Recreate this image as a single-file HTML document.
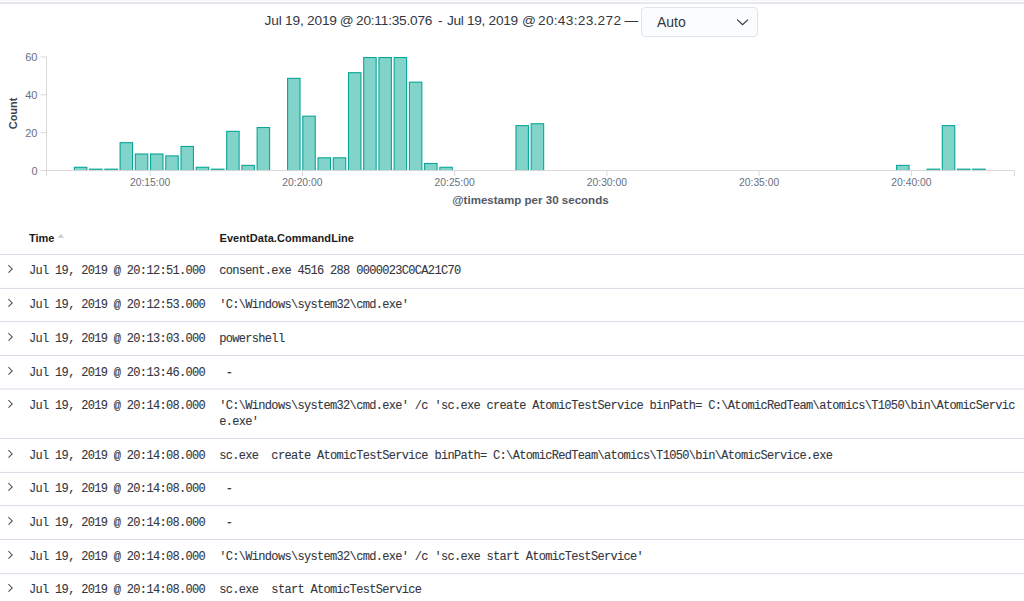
<!DOCTYPE html>
<html><head><meta charset="utf-8"><title>Discover</title>
<style>
html,body{margin:0;padding:0;background:#fff;}
body{width:1024px;height:601px;overflow:hidden;position:relative;font-family:"Liberation Sans",sans-serif;color:#343741;}
.abs{position:absolute;}
.top0{position:absolute;left:0;top:0;width:1024px;height:1px;background:#f7f8fa;}
.top1{position:absolute;left:0;top:2px;width:1024px;height:1px;background:#e8ebf2;}
.top2{position:absolute;left:0;top:3px;width:1024px;height:1px;background:#e2e6ec;}
.top3{position:absolute;left:0;top:5px;width:1024px;height:1px;background:#fcfcfc;}
.title{position:absolute;left:265px;top:10.6px;font-size:13.7px;line-height:20px;white-space:nowrap;color:#343741;}
.sel{position:absolute;left:641px;top:7px;width:115px;height:27.8px;border:1px solid #dfe4ec;border-radius:4px;background:#fbfcfd;box-sizing:content-box;}
.sel .t{position:absolute;left:15px;top:4px;font-size:14px;line-height:20px;color:#343741;}
.sel svg{position:absolute;left:94px;top:10.2px;}
svg.chart{position:absolute;left:0;top:0;}
.ax line{stroke:#d9d9d9;stroke-width:1;}
.bars rect{fill:#82d4ca;stroke:#07a696;stroke-width:1.1;}
.yl text,.xl text{font-family:"Liberation Sans",sans-serif;font-size:11px;fill:#69707d;}
.xl text{font-size:10.3px;}
.hdr{position:absolute;top:231.1px;font-size:11px;font-weight:bold;line-height:14px;color:#1a1c21;white-space:nowrap;}
.tm,.cl{position:absolute;font-family:"Liberation Mono",monospace;font-size:12px;letter-spacing:-0.68px;line-height:15.6px;color:#343741;-webkit-text-stroke:0.1px #343741;white-space:pre;}
.tm{left:29px;}
.cl{left:219.2px;width:799px;white-space:pre-wrap;word-break:break-all;}
.chev{position:absolute;left:6.5px;width:8px;height:10px;}
.chev svg{display:block;}
.hl{position:absolute;left:0;width:1024px;height:1px;background:#d3dae6;}
</style></head><body>
<div class="top0"></div>
<div class="top1"></div><div class="top2"></div><div class="top3"></div>
<div class="title" style="left:264.6px;letter-spacing:-0.2px">Jul 19, 2019</div><div class="title" style="left:339.8px">@</div><div class="title" style="left:356px;letter-spacing:-0.22px">20:11:35.076</div><div class="title" style="left:437.9px">-</div><div class="title" style="left:446.9px;letter-spacing:-0.3px">Jul 19, 2019</div><div class="title" style="left:522.1px">@</div><div class="title" style="left:538px;letter-spacing:0.28px">20:43:23.272</div><div class="title" style="left:624.6px">—</div>
<div class="sel"><span class="t">Auto</span><svg width="14" height="8" viewBox="0 0 14 8"><path d="M1.2 1.6 L6.6 6.6 L12 1.6" fill="none" stroke="#343741" stroke-width="1.25"/></svg></div>
<svg class="chart" width="1024" height="215" viewBox="0 0 1024 215">
<g class="bars">
<rect x="74.42" y="167.27" width="12.45" height="3.23"/>
<rect x="89.65" y="169.16" width="12.45" height="1.34"/>
<rect x="104.87" y="169.16" width="12.45" height="1.34"/>
<rect x="120.10" y="142.67" width="12.45" height="27.83"/>
<rect x="135.32" y="154.02" width="12.45" height="16.48"/>
<rect x="150.55" y="154.02" width="12.45" height="16.48"/>
<rect x="165.78" y="155.91" width="12.45" height="14.59"/>
<rect x="181.00" y="146.45" width="12.45" height="24.05"/>
<rect x="196.23" y="167.27" width="12.45" height="3.23"/>
<rect x="211.45" y="169.16" width="12.45" height="1.34"/>
<rect x="226.68" y="131.32" width="12.45" height="39.18"/>
<rect x="241.91" y="165.37" width="12.45" height="5.13"/>
<rect x="257.13" y="127.53" width="12.45" height="42.97"/>
<rect x="287.58" y="78.34" width="12.45" height="92.16"/>
<rect x="302.81" y="116.18" width="12.45" height="54.32"/>
<rect x="318.04" y="157.81" width="12.45" height="12.69"/>
<rect x="333.26" y="157.81" width="12.45" height="12.69"/>
<rect x="348.49" y="72.67" width="12.45" height="97.83"/>
<rect x="363.71" y="57.53" width="12.45" height="112.97"/>
<rect x="378.94" y="57.53" width="12.45" height="112.97"/>
<rect x="394.17" y="57.53" width="12.45" height="112.97"/>
<rect x="409.39" y="82.13" width="12.45" height="88.37"/>
<rect x="424.62" y="163.48" width="12.45" height="7.02"/>
<rect x="439.84" y="167.27" width="12.45" height="3.23"/>
<rect x="515.97" y="125.64" width="12.45" height="44.86"/>
<rect x="531.20" y="123.75" width="12.45" height="46.75"/>
<rect x="896.62" y="165.37" width="12.45" height="5.13"/>
<rect x="927.08" y="169.16" width="12.45" height="1.34"/>
<rect x="942.30" y="125.64" width="12.45" height="44.86"/>
<rect x="957.53" y="169.16" width="12.45" height="1.34"/>
<rect x="972.75" y="169.16" width="12.45" height="1.34"/>
</g>
<g class="ax">
<line x1="46.5" y1="56.5" x2="46.5" y2="176"/>
<line x1="46.5" y1="170.5" x2="1014.5" y2="170.5"/>
<line x1="150.10" y1="170.5" x2="150.10" y2="176"/><line x1="302.36" y1="170.5" x2="302.36" y2="176"/><line x1="454.62" y1="170.5" x2="454.62" y2="176"/><line x1="606.88" y1="170.5" x2="606.88" y2="176"/><line x1="759.14" y1="170.5" x2="759.14" y2="176"/><line x1="911.40" y1="170.5" x2="911.40" y2="176"/><line x1="46.5" y1="170.5" x2="46.5" y2="176"/><line x1="1014.5" y1="170.5" x2="1014.5" y2="176"/>
<line x1="40.5" y1="170.50" x2="46.5" y2="170.50"/><line x1="40.5" y1="132.66" x2="46.5" y2="132.66"/><line x1="40.5" y1="94.82" x2="46.5" y2="94.82"/><line x1="40.5" y1="56.98" x2="46.5" y2="56.98"/>
</g>
<g class="xl"><text x="150.10" y="185.5" text-anchor="middle">20:15:00</text><text x="302.36" y="185.5" text-anchor="middle">20:20:00</text><text x="454.62" y="185.5" text-anchor="middle">20:25:00</text><text x="606.88" y="185.5" text-anchor="middle">20:30:00</text><text x="759.14" y="185.5" text-anchor="middle">20:35:00</text><text x="911.40" y="185.5" text-anchor="middle">20:40:00</text></g>
<g class="yl"><text x="37.5" y="174.50" text-anchor="end">0</text><text x="37.5" y="136.66" text-anchor="end">20</text><text x="37.5" y="98.82" text-anchor="end">40</text><text x="37.5" y="60.98" text-anchor="end">60</text></g>
<text x="17.5" y="113.4" transform="rotate(-90 17.5 113.4)" text-anchor="middle" style="font-family:'Liberation Sans',sans-serif;font-size:11px;font-weight:bold;fill:#3a3f4b">Count</text>
<text x="530.5" y="203.5" text-anchor="middle" style="font-family:'Liberation Sans',sans-serif;font-size:11.55px;font-weight:bold;fill:#535966">@timestamp per 30 seconds</text>
</svg>
<div class="hdr" style="left:29px">Time</div>
<svg class="abs" style="left:57px;top:233px" width="8" height="6" viewBox="0 0 8 6"><path d="M0.8 4.7 L3.9 1 L7 4.7 Z" fill="#c4cbd8"/></svg>
<div class="hdr" style="left:219.5px;letter-spacing:0.06px">EventData.CommandLine</div>
<div class="chev" style="top:263.90px"><svg width="8" height="10" viewBox="0 0 8 10"><path d="M1.4 1.2 L5.2 4.95 L1.5 8.7" fill="none" stroke="#4a4f5a" stroke-width="1.05"/></svg></div>
<div class="tm" style="top:263.80px">Jul 19, 2019 @ 20:12:51.000</div>
<div class="cl" style="top:263.80px">consent.exe&#32;4516&#32;288&#32;0000023C0CA21C70</div>
<div class="chev" style="top:297.90px"><svg width="8" height="10" viewBox="0 0 8 10"><path d="M1.4 1.2 L5.2 4.95 L1.5 8.7" fill="none" stroke="#4a4f5a" stroke-width="1.05"/></svg></div>
<div class="tm" style="top:297.80px">Jul 19, 2019 @ 20:12:53.000</div>
<div class="cl" style="top:297.80px">&#x27;C:\Windows\system32\cmd.exe&#x27;</div>
<div class="chev" style="top:331.90px"><svg width="8" height="10" viewBox="0 0 8 10"><path d="M1.4 1.2 L5.2 4.95 L1.5 8.7" fill="none" stroke="#4a4f5a" stroke-width="1.05"/></svg></div>
<div class="tm" style="top:331.80px">Jul 19, 2019 @ 20:13:03.000</div>
<div class="cl" style="top:331.80px">powershell</div>
<div class="chev" style="top:365.90px"><svg width="8" height="10" viewBox="0 0 8 10"><path d="M1.4 1.2 L5.2 4.95 L1.5 8.7" fill="none" stroke="#4a4f5a" stroke-width="1.05"/></svg></div>
<div class="tm" style="top:365.80px">Jul 19, 2019 @ 20:13:46.000</div>
<div class="cl" style="top:365.80px">&#32;-</div>
<div class="chev" style="top:399.30px"><svg width="8" height="10" viewBox="0 0 8 10"><path d="M1.4 1.2 L5.2 4.95 L1.5 8.7" fill="none" stroke="#4a4f5a" stroke-width="1.05"/></svg></div>
<div class="tm" style="top:399.20px">Jul 19, 2019 @ 20:14:08.000</div>
<div class="cl" style="top:399.20px">&#x27;C:\Windows\system32\cmd.exe&#x27;&#32;/c&#32;&#x27;sc.exe&#32;create&#32;AtomicTestService&#32;binPath=&#32;C:\AtomicRedTeam\atomics\T1050\bin\AtomicService.exe&#x27;</div>
<div class="chev" style="top:448.90px"><svg width="8" height="10" viewBox="0 0 8 10"><path d="M1.4 1.2 L5.2 4.95 L1.5 8.7" fill="none" stroke="#4a4f5a" stroke-width="1.05"/></svg></div>
<div class="tm" style="top:448.80px">Jul 19, 2019 @ 20:14:08.000</div>
<div class="cl" style="top:448.80px">sc.exe&#32;&#32;create&#32;AtomicTestService&#32;binPath=&#32;C:\AtomicRedTeam\atomics\T1050\bin\AtomicService.exe</div>
<div class="chev" style="top:482.30px"><svg width="8" height="10" viewBox="0 0 8 10"><path d="M1.4 1.2 L5.2 4.95 L1.5 8.7" fill="none" stroke="#4a4f5a" stroke-width="1.05"/></svg></div>
<div class="tm" style="top:482.20px">Jul 19, 2019 @ 20:14:08.000</div>
<div class="cl" style="top:482.20px">&#32;-</div>
<div class="chev" style="top:515.90px"><svg width="8" height="10" viewBox="0 0 8 10"><path d="M1.4 1.2 L5.2 4.95 L1.5 8.7" fill="none" stroke="#4a4f5a" stroke-width="1.05"/></svg></div>
<div class="tm" style="top:515.80px">Jul 19, 2019 @ 20:14:08.000</div>
<div class="cl" style="top:515.80px">&#32;-</div>
<div class="chev" style="top:549.90px"><svg width="8" height="10" viewBox="0 0 8 10"><path d="M1.4 1.2 L5.2 4.95 L1.5 8.7" fill="none" stroke="#4a4f5a" stroke-width="1.05"/></svg></div>
<div class="tm" style="top:549.80px">Jul 19, 2019 @ 20:14:08.000</div>
<div class="cl" style="top:549.80px">&#x27;C:\Windows\system32\cmd.exe&#x27;&#32;/c&#32;&#x27;sc.exe&#32;start&#32;AtomicTestService&#x27;</div>
<div class="chev" style="top:583.30px"><svg width="8" height="10" viewBox="0 0 8 10"><path d="M1.4 1.2 L5.2 4.95 L1.5 8.7" fill="none" stroke="#4a4f5a" stroke-width="1.05"/></svg></div>
<div class="tm" style="top:583.20px">Jul 19, 2019 @ 20:14:08.000</div>
<div class="cl" style="top:583.20px">sc.exe&#32;&#32;start&#32;AtomicTestService</div>
<svg class="abs" style="left:0;top:0" width="1024" height="601"><rect x="0" y="254.00" width="1024" height="1" fill="#d8dde7"/><rect x="0" y="287.90" width="1024" height="1" fill="#d8dde7"/><rect x="0" y="321.10" width="1024" height="1" fill="#d8dde7"/><rect x="0" y="355.00" width="1024" height="1" fill="#d8dde7"/><rect x="0" y="388.50" width="1024" height="1" fill="#d8dde7"/><rect x="0" y="438.00" width="1024" height="1" fill="#d8dde7"/><rect x="0" y="471.90" width="1024" height="1" fill="#d8dde7"/><rect x="0" y="505.10" width="1024" height="1" fill="#d8dde7"/><rect x="0" y="539.00" width="1024" height="1" fill="#d8dde7"/><rect x="0" y="573.20" width="1024" height="1" fill="#d8dde7"/></svg>
</body></html>
